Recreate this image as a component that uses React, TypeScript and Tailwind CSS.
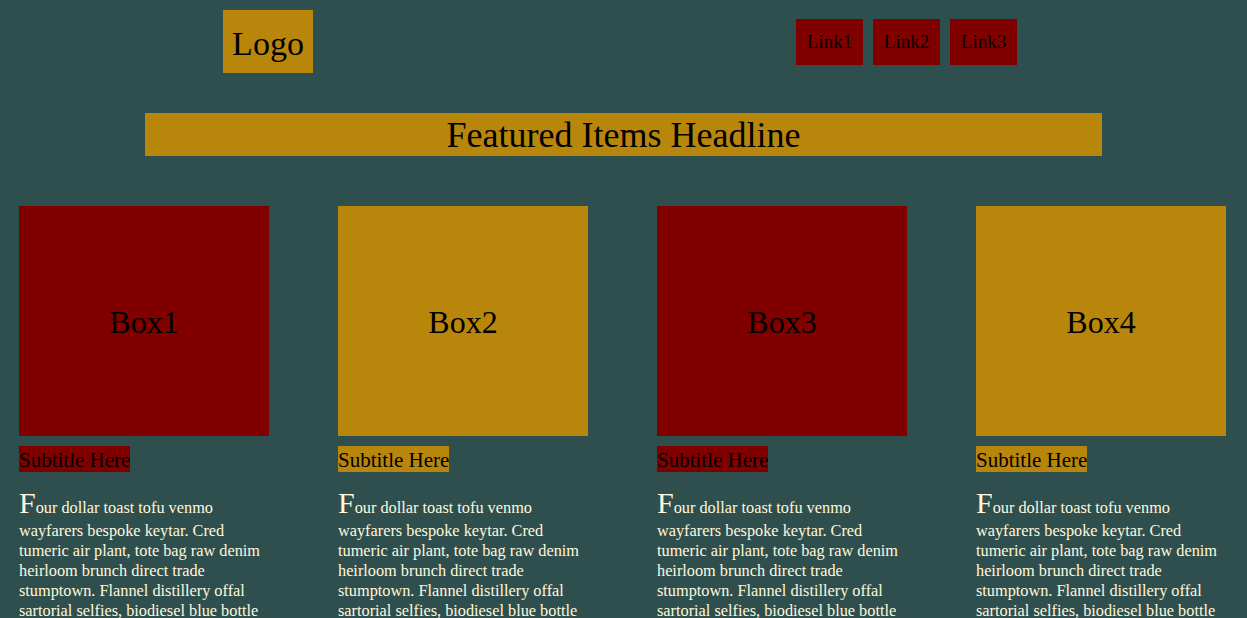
import React from "react";

const boxes = [
  { name: "Box1", bg: "bg-[#800000]" },
  { name: "Box2", bg: "bg-[#b8860b]" },
  { name: "Box3", bg: "bg-[#800000]" },
  { name: "Box4", bg: "bg-[#b8860b]" },
];

const body =
  "our dollar toast tofu venmo wayfarers bespoke keytar. Cred tumeric air plant, tote bag raw denim heirloom brunch direct trade stumptown. Flannel distillery offal sartorial selfies, biodiesel blue bottle pickled kale chips.";

export default function App() {
  return (
    <div
      className="min-h-[618px] w-full overflow-hidden bg-[#2f4f4f] text-black"
      style={{ fontFamily: '"Liberation Serif", "DejaVu Serif", serif' }}
    >
      <header className="flex items-center justify-between pl-[223px] pr-[230px] pt-[10px]">
        <div className="flex h-[63px] w-[90px] items-center justify-center bg-[#b8860b] pt-[3px] text-[34px]">
          Logo
        </div>
        <nav className="flex gap-[10px]">
          {["Link1", "Link2", "Link3"].map((l) => (
            <a
              key={l}
              className="flex h-[46px] w-[67px] items-center justify-center bg-[#800000] pt-[2px] text-[19px]"
            >
              {l}
            </a>
          ))}
        </nav>
      </header>
      <h1 className="mx-auto mt-[40px] flex h-[43px] w-[957px] items-center justify-center bg-[#b8860b] text-[36px]">
        Featured Items Headline
      </h1>
      <main className="mt-[50px] flex gap-[69px] pl-[19px]">
        {boxes.map((b) => (
          <section key={b.name} className="w-[250px] shrink-0">
            <div
              className={`flex h-[230px] w-[250px] items-center justify-center pt-[2px] text-[32px] ${b.bg}`}
            >
              {b.name}
            </div>
            <div className={`mt-[10px] inline-block h-[26px] text-[21px] leading-[28px] ${b.bg}`}>
              Subtitle Here
            </div>
            <p className="mt-[11px] text-[16.3px] leading-[20px] text-[#fff8dc]">
              <span className="text-[30px] leading-[36px]">F</span>
              {body}
            </p>
          </section>
        ))}
      </main>
    </div>
  );
}
